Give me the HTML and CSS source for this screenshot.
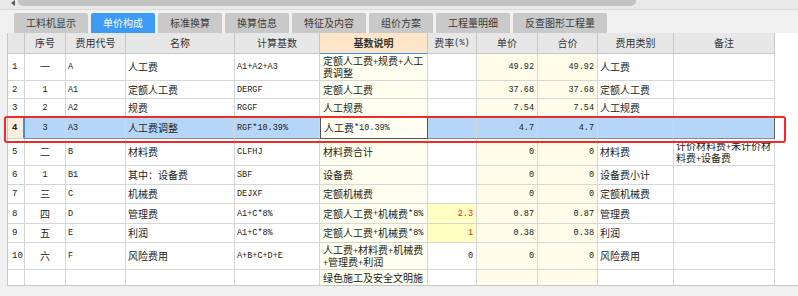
FILE: index.html
```html
<!DOCTYPE html>
<html lang="zh-CN">
<head>
<meta charset="utf-8">
<title>单价构成</title>
<link rel="stylesheet" href="styles.css">
</head>
<body>
<div class="topbar"><span class="arrow"></span><span class="thumb"></span></div>
<div class="tabs">
  <div class="tab">工料机显示</div>
  <div class="tab active">单价构成</div>
  <div class="tab">标准换算</div>
  <div class="tab">换算信息</div>
  <div class="tab">特征及内容</div>
  <div class="tab">组价方案</div>
  <div class="tab">工程量明细</div>
  <div class="tab">反查图形工程量</div>
</div>
<div class="main">
  <div class="panel">
    <div class="row head">
      <div class="c"></div>
      <div class="c ctr">序号</div>
      <div class="c ctr">费用代号</div>
      <div class="c ctr">名称</div>
      <div class="c ctr">计算基数</div>
      <div class="c ctr focus">基数说明</div>
      <div class="c ctr">费率<span class="mi">(%)</span></div>
      <div class="c ctr">单价</div>
      <div class="c ctr">合价</div>
      <div class="c ctr">费用类别</div>
      <div class="c ctr">备注</div>
    </div>

    <div class="row h27">
      <div class="c num">1</div><div class="c ctr">一</div><div class="c m">A</div><div class="c">人工费</div><div class="c m">A1+A2+A3</div>
      <div class="c desc"><span>定额人工费<span class="mi">+</span>规费<span class="mi">+</span>人工<br>费调整</span></div><div class="c"></div>
      <div class="c price m">49.92</div><div class="c price m">49.92</div><div class="c">人工费</div><div class="c"></div>
    </div>
    <div class="row h18">
      <div class="c num">2</div><div class="c ctr m">1</div><div class="c m">A1</div><div class="c">定额人工费</div><div class="c m">DERGF</div>
      <div class="c desc">定额人工费</div><div class="c"></div>
      <div class="c price m">37.68</div><div class="c price m">37.68</div><div class="c">定额人工费</div><div class="c"></div>
    </div>
    <div class="row h18">
      <div class="c num">3</div><div class="c ctr m">2</div><div class="c m">A2</div><div class="c">规费</div><div class="c m">RGGF</div>
      <div class="c desc">人工规费</div><div class="c"></div>
      <div class="c price m">7.54</div><div class="c price m">7.54</div><div class="c">人工规费</div><div class="c"></div>
    </div>
    <div class="row h22 sel">
      <div class="c num cur">4</div><div class="c ctr m first">3</div><div class="c m">A3</div><div class="c">人工费调整</div><div class="c m">RGF*10.39%</div>
      <div class="c edit">人工费<span class="mi">*10.39%</span></div><div class="c"></div>
      <div class="c r m">4.7</div><div class="c r m">4.7</div><div class="c"></div><div class="c last"></div>
    </div>
    <div class="row h27">
      <div class="c num">5</div><div class="c ctr">二</div><div class="c m">B</div><div class="c">材料费</div><div class="c m">CLFHJ</div>
      <div class="c desc">材料费合计</div><div class="c"></div>
      <div class="c price m">0</div><div class="c price m">0</div><div class="c">材料费</div><div class="c"><span>计价材料费<span class="mi">+</span>未计价材<br>料费<span class="mi">+</span>设备费</span></div>
    </div>
    <div class="row h19">
      <div class="c num">6</div><div class="c ctr m">1</div><div class="c m">B1</div><div class="c">其中：设备费</div><div class="c m">SBF</div>
      <div class="c desc">设备费</div><div class="c"></div>
      <div class="c price m">0</div><div class="c price m">0</div><div class="c">设备费小计</div><div class="c"></div>
    </div>
    <div class="row h19">
      <div class="c num">7</div><div class="c ctr">三</div><div class="c m">C</div><div class="c">机械费</div><div class="c m">DEJXF</div>
      <div class="c desc">定额机械费</div><div class="c"></div>
      <div class="c price m">0</div><div class="c price m">0</div><div class="c">定额机械费</div><div class="c"></div>
    </div>
    <div class="row h20">
      <div class="c num">8</div><div class="c ctr">四</div><div class="c m">D</div><div class="c">管理费</div><div class="c m">A1+C*8%</div>
      <div class="c desc">定额人工费<span class="mi">+</span>机械费<span class="mi">*8%</span></div><div class="c rate m">2.3</div>
      <div class="c price m">0.87</div><div class="c price m">0.87</div><div class="c">管理费</div><div class="c"></div>
    </div>
    <div class="row h19">
      <div class="c num">9</div><div class="c ctr">五</div><div class="c m">E</div><div class="c">利润</div><div class="c m">A1+C*8%</div>
      <div class="c desc">定额人工费<span class="mi">+</span>机械费<span class="mi">*8%</span></div><div class="c rate m">1</div>
      <div class="c price m">0.38</div><div class="c price m">0.38</div><div class="c">利润</div><div class="c"></div>
    </div>
    <div class="row h27">
      <div class="c num">10</div><div class="c ctr">六</div><div class="c m">F</div><div class="c">风险费用</div><div class="c m">A+B+C+D+E</div>
      <div class="c desc"><span>人工费<span class="mi">+</span>材料费<span class="mi">+</span>机械费<br><span class="mi">+</span>管理费<span class="mi">+</span>利润</span></div><div class="c r m">0</div>
      <div class="c price m">0</div><div class="c price m">0</div><div class="c">风险费用</div><div class="c"></div>
    </div>
    <div class="row tail">
      <div class="c num"></div><div class="c"></div><div class="c"></div><div class="c"></div><div class="c"></div>
      <div class="c desc"><span>绿色施工及安全文明施<br>工措施费</span></div><div class="c"></div>
      <div class="c price"></div><div class="c price"></div><div class="c"></div><div class="c"></div>
    </div>
  </div>
  <div class="hl"></div>
</div>
</body>
</html>
```
FILE: styles.css
```css
* { box-sizing: border-box; }
html, body { margin: 0; padding: 0; }
body {
  width: 798px;
  height: 296px;
  overflow: hidden;
  background: #f0f0f0;
  font-family: "Noto Sans CJK SC", "Noto Sans", sans-serif;
  font-size: 10px;
  color: #222;
}
.topbar {
  height: 10px;
  background: #e9e9e9;
  border-bottom: 1px solid #dadada;
  display: flex;
  align-items: flex-start;
}
.arrow {
  width: 0;
  height: 0;
  margin: 0 3px 0 11px;
  border-top: 3px solid transparent;
  border-bottom: 3px solid transparent;
  border-right: 4px solid #5a5a5a;
}
.thumb {
  width: 618px;
  height: 6px;
  background: #c3c3c3;
  border-radius: 0 0 5px 5px;
}
.tabs {
  display: flex;
  gap: 3px;
  padding-left: 14px;
  margin-top: 3px;
  height: 20px;
}
.tab {
  height: 20px;
  line-height: 20px;
  padding: 0 12px;
  background: #c9c9c9;
  color: #3a3a3a;
  border-radius: 2px 2px 0 0;
  white-space: nowrap;
}
.tab.active { background: #3d9bf5; color: #fff; }
.main { position: relative; }
.panel {
  margin-left: 7px;
  height: 253px;
  background: #fff;
  border-left: 1px solid #c8c8c8;
  border-bottom: 1px solid #c8c8c8;
  overflow: hidden;
}
.row {
  display: grid;
  grid-template-columns: 17px 41px 60px 109px 85px 108px 49px 61px 60px 76px 101px;
}
.c {
  display: flex;
  align-items: center;
  padding: 0 2px;
  white-space: nowrap;
  overflow: hidden;
  line-height: 12px;
  border-right: 1px solid #d6d6d6;
  border-bottom: 1px solid #d6d6d6;
}
.head { height: 21px; }
.head .c {
  background: #e7e7e7;
  color: #333;
  border-color: #c6c6c6;
}
.head .focus {
  background: #fde6c8;
  font-weight: bold;
  border-bottom-color: #3c8ee8;
}
.h18 { height: 18px; }
.h19 { height: 19px; }
.h20 { height: 20px; }
.h22 { height: 22px; }
.h27 { height: 27px; }
.tail { height: 30px; }
.tail .c { align-items: flex-start; padding-top: 2px; }
.ctr { justify-content: center; }
.r { justify-content: flex-end; padding-right: 3px; }
.m { font-family: "Liberation Mono", monospace; font-size: 8.5px; }
.mi {
  font-family: "Liberation Mono", monospace;
  font-size: 8.5px;
  line-height: 0;
}
.num {
  font-family: "Liberation Mono", monospace;
  font-size: 9px;
  padding-left: 4px;
}
.desc { background: #fffff0; padding-left: 3px; }
.price { background: #fffde9; justify-content: flex-end; padding-right: 3px; }
.rate {
  background: #ffffc2;
  color: #f02020;
  justify-content: flex-end;
  padding-right: 3px;
}
.sel .c { background: #b6d6f8; border-bottom-color: #8a8a8a; }
.sel .num.cur {
  background: #fbeedd;
  font-weight: bold;
  border-right: 2px solid #3d8fe6;
  border-bottom-color: #d6d6d6;
}
.sel .edit {
  background: #fffff4;
  border: 1px solid #555;
  padding-left: 3px;
}
.sel .last { border-right-color: #666; }
.hl {
  position: absolute;
  left: 4px;
  top: 83px;
  width: 782px;
  height: 27px;
  border: 2px solid #ee2a2a;
  border-radius: 3px;
  pointer-events: none;
}
```
